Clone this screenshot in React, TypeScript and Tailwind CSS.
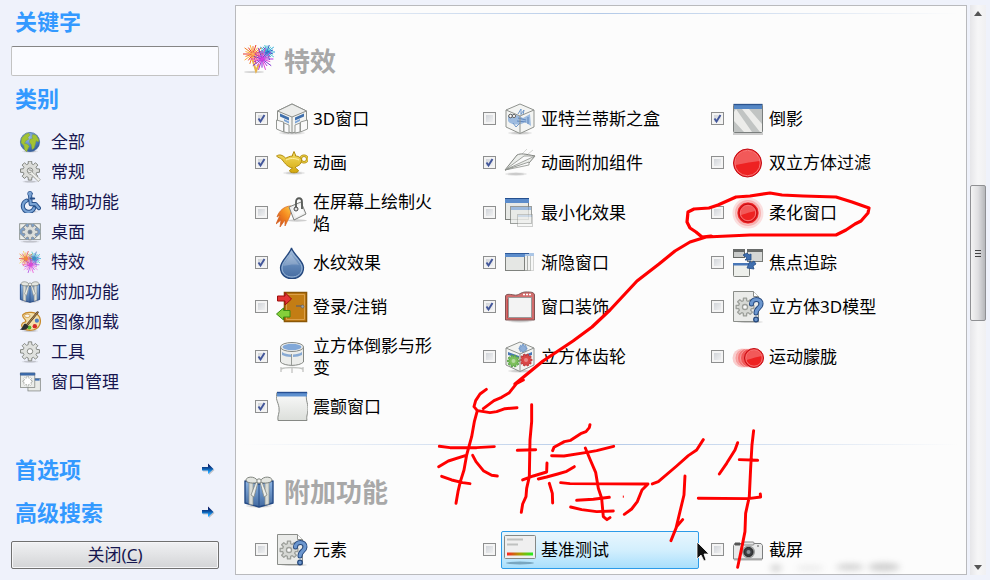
import type { ReactNode } from "react";
import clsx from "clsx";

interface IconProps {
  className?: string;
}

interface Plugin {
  label: string;
  icon: (props: IconProps) => ReactNode;
  enabled?: boolean;
  active?: boolean;
}

// outline of a cog wheel with straight teeth
function gearPath(cx: number, cy: number, r: number, teeth = 8) {
  const points: string[] = [];
  const step = (Math.PI * 2) / teeth;
  for (let i = 0; i < teeth; i++) {
    const a = i * step;
    [
      [-0.34, 0.72],
      [-0.22, 1],
      [0.22, 1],
      [0.34, 0.72],
    ].forEach(([offset, k]) => {
      const t = a + offset * step;
      points.push(`${(cx + Math.cos(t) * r * k).toFixed(2)} ${(cy + Math.sin(t) * r * k).toFixed(2)}`);
    });
  }
  return `M${points.join("L")}Z`;
}

function Gear({ cx, cy, r, fill = "#dcddda", stroke = "#7b7d79", teeth = 8 }: { cx: number; cy: number; r: number; fill?: string; stroke?: string; teeth?: number }) {
  return (
    <g stroke={stroke} strokeWidth="1.3" strokeLinejoin="round">
      <path d={gearPath(cx, cy, r, teeth)} fill={fill} />
      <circle cx={cx} cy={cy} r={r * 0.28} fill="#fafafa" />
    </g>
  );
}

function Burst({ cx, cy, r, colors }: { cx: number; cy: number; r: number; colors: string[] }) {
  return (
    <g strokeWidth="1" strokeLinecap="round">
      {Array.from({ length: 20 }, (_, i) => {
        const a = (i / 20) * Math.PI * 2;
        const k = i % 2 ? r * 0.75 : r;
        return <line key={i} x1={cx} y1={cy} x2={cx + Math.cos(a) * k} y2={cy + Math.sin(a) * k} stroke={colors[i % colors.length]} />;
      })}
    </g>
  );
}

function Icon({ className, children }: { className?: string; children: ReactNode }) {
  return (
    <svg viewBox="0 0 32 32" fill="none" aria-hidden="true" className={clsx("shrink-0", className ?? "size-8")}>
      {children}
    </svg>
  );
}

function Shadow({ cx = 16, cy = 30, rx = 12 }: { cx?: number; cy?: number; rx?: number }) {
  return (
    <g fill="#000">
      <ellipse cx={cx} cy={cy} rx={rx} ry="1.8" opacity=".08" />
      <ellipse cx={cx} cy={cy} rx={rx * 0.75} ry="1.2" opacity=".12" />
    </g>
  );
}

const GlobeIcon = ({ className }: IconProps) => (
  <Icon className={className}>
    <defs>
      <radialGradient id="globe" cx=".4" cy=".25" r=".85">
        <stop stopColor="#9fc0e6" />
        <stop offset=".6" stopColor="#4d7ebd" />
        <stop offset="1" stopColor="#274b87" />
      </radialGradient>
    </defs>
    <Shadow cy={29.6} />
    <circle cx="16" cy="16" r="14" fill="url(#globe)" stroke="#3f679f" />
    <path d="M4 10l5-5 5-2 2 3-3 3 1 3-4 2-2 4 4 1 3 3-2 4-2 4-3-3-1-6-4-4zM20 5l5 1 4 7-1 3-3-2-1 4-2 7-3 2-1-7-3-4 1-4 4-1-1-3z" fill="#a3c333" stroke="#7e9c2b" strokeWidth=".6" />
  </Icon>
);

const WrenchGearIcon = ({ className }: IconProps) => (
  <Icon className={className}>
    <Shadow cy={30} rx={11} />
    <Gear cx={16} cy={14} r={14} stroke="#777a75" />
    <path d="M14 13a5 5 0 016 4l11 10-3 3-10-10a5 5 0 01-5-4l4 1 1-3z" fill="#e9eae6" stroke="#8d8f89" />
    <path d="M20 18l10 10" stroke="#fff" />
  </Icon>
);

const WheelchairIcon = ({ className }: IconProps) => (
  <Icon className={className}>
    <Shadow cy={30} />
    <g strokeLinecap="round" strokeLinejoin="round">
      <g stroke="#27508a" strokeWidth="6">
        <path d="M16 5l1 14h7l5 6M11 14a8.500 8.500 0 1011 11" />
      </g>
      <circle cx="16" cy="4" r="3.5" fill="#7fa7d8" stroke="#27508a" />
      <path d="M16 5l1 14h7l5 6M11 14a8.500 8.500 0 1011 11" stroke="#79a3d4" strokeWidth="3.200" />
      <path d="M17 11h5" stroke="#27508a" strokeWidth="3" />
    </g>
  </Icon>
);

const DesktopIcon = ({ className }: IconProps) => (
  <Icon className={className}>
    <Shadow cy={30} rx={14} />
    <rect x="1" y="4" width="30" height="23" fill="#7d9fc9" stroke="#85908f" />
    <path d="M1 4h10l-10 9zM31 4H21l10 9zM1 27v-9l10 9zM31 27v-9l-10 9z" fill="#eef0ed" stroke="#8b8f8a" strokeLinejoin="round" />
    <path d={gearPath(16, 16, 11.5)} fill="#dcdedb" stroke="#7f858a" />
    <circle cx="16" cy="16" r="3" fill="#6d7f95" stroke="#788590" />
  </Icon>
);

const FireworksIcon = ({ className }: IconProps) => (
  <Icon className={className}>
    <ellipse cx="11" cy="27" rx="10" ry="1" fill="#000" opacity=".16" />
    <path d="M9 13l4 13 3-7" stroke="#e7b34c" strokeWidth="2" />
    <Burst cx={24} cy={7} r={8} colors={["#2aa9d8", "#2467c1", "#42c4cf"]} />
    <Burst cx={10} cy={9} r={10} colors={["#f47b20", "#e83b2b", "#fcb43c"]} />
    <Burst cx={19} cy={14} r={11} colors={["#b62fe0", "#e445d8", "#7d2ed4"]} />
    <circle cx="10" cy="9" r="1.8" fill="#ffb060" />
    <circle cx="19" cy="14" r="1.8" fill="#d93ce0" />
  </Icon>
);

const EffectsIcon = ({ className }: IconProps) => (
  <Icon className={className}>
    <g strokeWidth="1.4">
      <Burst cx={22} cy={11} r={10} colors={["#1ea4d3", "#245fbe", "#36c2b5"]} />
      <Burst cx={10} cy={11} r={11} colors={["#f58a20", "#e8392b", "#f7c63c"]} />
      <Burst cx={17} cy={20} r={12} colors={["#a82fe0", "#ee3fd0", "#f27ae0"]} />
    </g>
    <circle cx="10" cy="11" r="3" fill="#f08a3c" />
    <circle cx="22" cy="11" r="3" fill="#3d8fc4" />
    <circle cx="17" cy="20" r="3" fill="#d84bd8" />
  </Icon>
);

const GiftIcon = ({ className }: IconProps) => (
  <Icon className={className}>
    <defs>
      <linearGradient id="gift" x2="0" y2="1">
        <stop stopColor="#8fb6e4" />
        <stop offset="1" stopColor="#41699f" />
      </linearGradient>
    </defs>
    <Shadow cy={30} rx={13} />
    <path d="M2 5l14 3 14-3v22l-14 4-14-4z" fill="url(#gift)" stroke="#244a85" strokeWidth="1.4" strokeLinejoin="round" />
    <path d="M16 8v23" stroke="#244a85" />
    <path d="M6 6l4 1v22l-4-1zM26 6l-4 1v22l4-1z" fill="#d9dcd7" stroke="#8b8f8b" strokeWidth=".7" />
    <path d="M15 6l-4 15-3-2 5-13zM17 6l4 15 3-2-5-13z" fill="#eceeea" stroke="#868a84" strokeWidth=".8" />
    <path d="M15 5C11-1 3 1 3 4s8 4 12 2zM17 5c4-6 12-4 12-1s-8 4-12 2z" fill="#e4e6e1" stroke="#80857f" />
    <circle cx="16" cy="5" r="2.2" fill="#f4f4f1" stroke="#80857f" />
  </Icon>
);

const PaletteIcon = ({ className }: IconProps) => (
  <Icon className={className}>
    <Shadow cy={29} />
    <path d="M6 5c5-5 20-4 24 4 3 8 0 18-12 19-9 1-15-4-14-8 1-5 5-2 6-5 0-4-7-5-4-10z" fill="#f3dfaa" stroke="#c78a2c" strokeWidth="1.8" />
    <ellipse cx="12" cy="7" rx="4" ry="2.5" fill="#f7f5ef" stroke="#c78a2c" />
    <circle cx="26" cy="14" r="3" fill="#4b7ec4" />
    <circle cx="23" cy="22" r="3.2" fill="#d42a2a" />
    <circle cx="15" cy="24" r="3" fill="#58b52b" />
    <path d="M27 2L12 20" stroke="#5b4326" strokeWidth="3.4" strokeLinecap="round" />
    <path d="M27 2L12 20" stroke="#c59a61" strokeWidth="1.2" />
    <path d="M9 18l5 4c-2 6-8 6-13 5 5-2 4-7 8-9z" fill="#2b2f32" />
  </Icon>
);

const GearIcon = ({ className }: IconProps) => (
  <Icon className={className}>
    <Shadow cy={30} />
    <Gear cx={16} cy={15} r={14} fill="#e0e2df" stroke="#7c7f79" />
  </Icon>
);

const WindowsIcon = ({ className }: IconProps) => (
  <Icon className={className}>
    <rect x="13" y="11" width="18" height="18" fill="#e9ebe8" stroke="#777b77" />
    <path d="M14 11h16v3H14z" fill="#3d6eb2" />
    <rect x="2" y="3" width="21" height="21" fill="#eceeeb" stroke="#777b77" />
    <path d="M2 3h21v3H2z" fill="#3d6eb2" stroke="#315b96" />
    <path d={gearPath(12.5, 15, 7)} fill="#fff" stroke="#7a7d78" strokeDasharray="1.4 1" />
  </Icon>
);

const Cube3DIcon = ({ className }: IconProps) => (
  <Icon className={className}>
    <Shadow cy={30} rx={13} />
    <g stroke="#8b8e8a" strokeLinejoin="round">
      <path d="M16 1l14.500 7v18L16 30 1.500 26V8z" fill="#f3f4f2" />
      <path d="M16 1l14.500 7L16 14 1.500 8z" fill="#ecedeb" />
      <path d="M16 14v16" />
    </g>
    <path d="M4 10.500l9 4v3l-9-4zM28 10.500l-9 4v3l9-4z" fill="#3f6fac" />
    <path d="M8 16l5 2.500v2L8 18zM24 16l-5 2.500v2l5-2.500z" fill="#7aa3d6" />
    <path d="M.5 17l7 2v10l-7-3zM31.500 17l-7 2v10l7-3zM8 20l5 2v8l-5-1zM24 20l-5 2v8l5-1z" fill="#fafafa" stroke="#959894" />
  </Icon>
);

const LampIcon = ({ className }: IconProps) => (
  <Icon className={className}>
    <defs>
      <linearGradient id="lamp" x2="0" y2="1">
        <stop stopColor="#f6e068" />
        <stop offset="1" stopColor="#d3a70b" />
      </linearGradient>
    </defs>
    <Shadow cx={18} cy={26} rx={11} />
    <circle cx="28" cy="12" r="3.300" stroke="#b18b0c" strokeWidth="2.600" />
    <circle cx="28" cy="12" r="3.300" stroke="#ead04a" strokeWidth="1.100" />
    <path d="M.5 9c3-2 6-1 9 2 1 0 4-2 7-2v-1l1.500-3.500L19.500 8v1c4 0 6 3 6 4 0 5-4 6-6 7v1l3 2.500c0 3-9 3-9 0l3-2.500c-6-1-9-7-11-9-1-1-3-1-5-3z" fill="url(#lamp)" stroke="#b18b0c" strokeLinejoin="round" />
    <path d="M10 13c4-2 9-2 13 0" stroke="#fff3a8" />
  </Icon>
);

const FireIcon = ({ className }: IconProps) => (
  <Icon className={className}>
    <defs>
      <linearGradient id="fire" x1="1" x2="0" y2="1">
        <stop stopColor="#ffd44a" />
        <stop offset=".45" stopColor="#f58a1f" />
        <stop offset="1" stopColor="#c8421c" />
      </linearGradient>
    </defs>
    <ellipse cx="21" cy="23.500" rx="10" ry="1.200" fill="#000" opacity=".18" />
    <path d="M15 9C8 9 3 14 1 20l3-2-4 9 5-4-1 7 5-7v6l4-8c2-4 1-7 4-9z" fill="url(#fire)" stroke="#d2601e" strokeWidth=".7" />
    <path d="M13 10l12-5 5 12-12 6z" fill="#eceded" stroke="#7f817e" strokeLinejoin="round" />
    <path d="M16 11l8-4 4 9-8 4z" fill="#fff" opacity=".7" />
    <path d="M20 13V5c0-5 6-5 6 0v7" stroke="#575a57" strokeWidth="1.800" />
    <circle cx="20" cy="12" r="2" fill="#ddd" stroke="#444" />
  </Icon>
);

const DropIcon = ({ className }: IconProps) => (
  <Icon className={className}>
    <defs>
      <linearGradient id="drop" x2="0" y2="1">
        <stop stopColor="#a9c1dd" />
        <stop offset=".6" stopColor="#5d83b4" />
        <stop offset="1" stopColor="#456a9f" />
      </linearGradient>
    </defs>
    <path d="M15.500 1C14 7 4.500 14 4.500 20.500c0 15 23 15 23 0C27.500 14 17 7 15.500 1z" fill="url(#drop)" stroke="#24477d" strokeWidth="1.300" />
    <path d="M15.500 4C14 9 6 15 6 21c0 12 20 12 20 0 0-6-9-12-10.500-17z" stroke="#9cb8d8" />
    <path d="M7 19c2-5 6-8 8-12 2 4 6 7 8 11-5-1-10 0-16 1z" fill="#fff" opacity=".2" />
  </Icon>
);

const DoorIcon = ({ className }: IconProps) => (
  <Icon className={className}>
    <path d="M8.500 1.500h22v29h-22z" fill="#c37d14" stroke="#8b5707" strokeWidth="1.600" />
    <path d="M10.500 3.500h18v25h-18z" stroke="#dca04a" />
    <path d="M20 15h7" stroke="#70665a" strokeWidth="1.500" />
    <circle cx="26.500" cy="15.500" r="1.500" fill="#9ba3ac" stroke="#5b5b5b" strokeWidth=".6" />
    <path d="M1.500 5H9V1.500L15.500 8 9 14v-4H1.500z" fill="#e33434" stroke="#9e0d0d" strokeLinejoin="round" />
    <path d="M14 19.500H7.500V17L.5 23l7 6v-3H14z" fill="#84cf3a" stroke="#3b8b13" strokeLinejoin="round" />
  </Icon>
);

const CylinderIcon = ({ className }: IconProps) => (
  <Icon className={className}>
    <path d="M5 26v5M16 26v6M27 26v5" stroke="#b2b4b1" strokeWidth="1.500" opacity=".7" />
    <path d="M5 28c5-2 17-2 22 0" stroke="#c2c4c1" strokeWidth="1.500" />
    <path d="M4.500 6v15c4 4.500 19 4.500 23 0V6z" fill="#ecedeb" stroke="#858884" />
    <ellipse cx="16" cy="6" rx="11.500" ry="4.500" fill="#f2f3f1" stroke="#858884" />
    <ellipse cx="16" cy="6" rx="9.500" ry="3.200" fill="#82a8d8" />
    <path d="M6 11c3 2 5 2 9 2.500V16c-4 0-6-1-9-2zM26 11c-3 2-5 2-9 2.500V16c4 0 6-1 9-2z" fill="#87a9d3" />
    <path d="M15.500 13v12" stroke="#969995" />
  </Icon>
);

const WobblyIcon = ({ className }: IconProps) => (
  <Icon className={className}>
    <defs>
      <linearGradient id="wobbly" x2="0" y2="1">
        <stop stopColor="#fafafa" />
        <stop offset="1" stopColor="#dcdfdb" />
      </linearGradient>
    </defs>
    <path d="M1 1.500h30c-2 7 1 10 1 16s-2 7-1 12H2c-1-5 2-7 1-13S-1 8 1 1.500z" fill="url(#wobbly)" stroke="#868985" />
    <path d="M1 1h30v4.500H1z" fill="#5e90cf" />
    <path d="M1 1.500h30" stroke="#264f92" strokeWidth="1.400" />
  </Icon>
);

const AtlantisIcon = ({ className }: IconProps) => (
  <Icon className={className}>
    <Shadow />
    <path d="M16 1l14 6v17l-14 6.500L2 24V7z" fill="#f3f4f2" />
    <path d="M4 13c4-3 10-1 15 2l7-4 1 12-6-4c-5 4-15 3-17-1z" fill="#9dbbdf" />
    <path d="M14 11l3-5v6M17 11l3-4-1 5M9 20l3 4 4-4" stroke="#6f97c9" />
    <circle cx="6.500" cy="13" r="1.800" fill="#fff" stroke="#555" />
    <circle cx="10" cy="13" r="1.600" fill="#fff" stroke="#666" />
    <path d="M14 15l8 2M13 18l9 1M24 14v7" stroke="#5d86bd" />
    <path d="M16 1l14 6v17l-14 6.500L2 24V7zM2 7l14 6 14-6M16 13v17" stroke="#8f928e" strokeLinejoin="round" />
  </Icon>
);

const PaperPlaneIcon = ({ className }: IconProps) => (
  <Icon className={className}>
    <Shadow cx={12} cy={27} rx={11} />
    <path d="M18 7l5-5M24 7l5-4" stroke="#d3d5d2" />
    <path d="M1 23L13 8c4-2 8-1 18 1L25 16 1 23z" fill="#eceeeb" stroke="#80837f" strokeLinejoin="round" />
    <path d="M1 23L20 9l11 0zM1 23l24-8v3z" fill="#fafafa" stroke="#8d908c" strokeWidth=".8" strokeLinejoin="round" />
  </Icon>
);

const MinimizeIcon = ({ className }: IconProps) => (
  <Icon className={className}>
    <rect x="1.500" y="1.500" width="23" height="21" fill="#e7e9e6" stroke="#7d807c" />
    <path d="M1 1h24v5H1z" fill="#5b8ccb" />
    <path d="M1 1.500h24" stroke="#25508f" />
    <g opacity=".75">
      <rect x="6.500" y="9.500" width="21" height="17" fill="#e9ebe8" stroke="#7d807c" />
      <path d="M7 10h20v3H7z" fill="#85abda" />
    </g>
    <g opacity=".4">
      <rect x="13.500" y="17.500" width="15" height="12" fill="#f2f3f1" stroke="#8b8e8a" />
      <path d="M14 18h14v2H14z" fill="#a9c4e6" />
    </g>
  </Icon>
);

const FadingIcon = ({ className }: IconProps) => (
  <Icon className={className}>
    <g stroke="#9da09c">
      <rect x="10.500" y="6.500" width="19" height="17" fill="#f2f3f1" opacity=".4" />
      <rect x="8.500" y="6.500" width="18" height="17" fill="#eff0ee" opacity=".6" />
      <rect x="5.500" y="6.500" width="18" height="17" fill="#eff0ee" opacity=".8" />
      <rect x="1.500" y="6.500" width="19" height="17" fill="#e5e7e4" stroke="#7f827e" />
    </g>
    <path d="M1 6h20v4H1z" fill="#5b8ccb" />
    <path d="M21 6h9v3h-9z" fill="#abc6e6" />
    <path d="M1 6.500h24" stroke="#2f5b9b" />
  </Icon>
);

const DecorationIcon = ({ className }: IconProps) => (
  <Icon className={className}>
    <Shadow />
    <path d="M1.500 5C2 3 5 3 10 4s6-3 12-3c5 0 8 0 8.500 3v25h-29z" fill="#d26c6c" stroke="#7e5454" />
    <path d="M3.500 8v19h25" stroke="#c24a4a" />
    <rect x="4.500" y="6.500" width="23" height="20" fill="#f3f3f3" stroke="#999" />
    <path d="M19 3.500h2M22 3.500h2M25 3.500h2" stroke="#fff" strokeWidth="1.500" />
  </Icon>
);

const CubeGearsIcon = ({ className }: IconProps) => (
  <Icon className={className}>
    <Shadow />
    <path d="M16 1l14 6v17l-14 6.500L2 24V7z" fill="#f3f4f2" />
    <path d={gearPath(19, 7.5, 4)} fill="#8fafd8" stroke="#6f95c6" />
    <path d="M4 11l11 4v2L4 14zM28 11l-10 4v2l10-3z" fill="#4776b4" />
    <path d={gearPath(9.5, 20, 6, 10)} fill="#7fc05b" stroke="#5aa348" />
    <circle cx="9.500" cy="20" r="2" fill="#b5dba0" />
    <path d={gearPath(22, 19, 6, 10)} fill="#dc4747" stroke="#c03636" />
    <circle cx="22" cy="19" r="2" fill="#e88888" />
    <path d="M16 1l14 6v17l-14 6.500L2 24V7zM2 7l14 6 14-6M16 13v17" stroke="#8f928e" strokeLinejoin="round" />
  </Icon>
);

const ReflectionIcon = ({ className }: IconProps) => (
  <Icon className={className}>
    <path d="M1 31h30" stroke="#000" opacity=".25" strokeWidth="1.500" />
    <rect x="1.500" y="1.500" width="29" height="28" rx="1" fill="#c1c4c3" stroke="#7a7e7d" />
    <path d="M2 9v9l10 11h8L4 6zM10 6l18 23h2v-8L17 6z" fill="#ececea" />
    <path d="M2 2h28v4H2z" fill="#5587c5" />
    <path d="M1.500 1.500h29" stroke="#2c548e" strokeWidth="1.300" />
  </Icon>
);

function RedBall({ cx, cy, r }: { cx: number; cy: number; r: number }) {
  return (
    <g>
      <circle cx={cx} cy={cy} r={r} fill="#ee2222" stroke="#c20d16" />
      <circle cx={cx} cy={cy} r={r - 1.3} stroke="#f77676" />
      <path d={`M${cx - r + 2} ${cy + 2}A${r - 2} ${r - 2} 0 01${cx + r - 2} ${cy - 2}Q${cx + 2} ${cy - 1} ${cx - r + 2} ${cy + 2}Z`} fill="#fff" opacity=".25" />
    </g>
  );
}

const RedBallIcon = ({ className }: IconProps) => (
  <Icon className={className}>
    <RedBall cx={15.5} cy={16} r={14} />
  </Icon>
);

const BlurBallIcon = ({ className }: IconProps) => (
  <Icon className={className}>
    <circle cx="16" cy="16" r="15.500" fill="#f36b6b" opacity=".2" />
    <circle cx="16" cy="16" r="13" fill="#f04b4b" opacity=".3" />
    <circle cx="16" cy="16" r="11" fill="#ee2222" stroke="#fff" strokeOpacity=".5" />
    <RedBall cx={16} cy={16} r={9} />
  </Icon>
);

const MotionBallIcon = ({ className }: IconProps) => (
  <Icon className={className}>
    <circle cx="10" cy="17" r="9.500" fill="#f03a3a" opacity=".25" />
    <circle cx="12.500" cy="17" r="9.500" fill="#f03a3a" stroke="#fff" strokeWidth=".6" opacity=".3" />
    <circle cx="15" cy="17" r="9.500" fill="#f03a3a" stroke="#fff" strokeWidth=".6" opacity=".4" />
    <circle cx="18" cy="17" r="9.500" fill="#f03a3a" stroke="#fff" strokeWidth=".6" opacity=".5" />
    <RedBall cx={22} cy={17} r={9.5} />
  </Icon>
);

const FocusIcon = ({ className }: IconProps) => (
  <Icon className={className}>
    <rect x="1.500" y="2.500" width="11" height="8" fill="#c9cbca" stroke="#666966" />
    <rect x="15.500" y="2.500" width="15" height="12" fill="#d5d7d6" stroke="#777a77" />
    <rect x="1.500" y="16.500" width="16" height="13" rx="1" fill="#edefeb" stroke="#7b7e7a" />
    <path d="M1 2h12v3H1zM15 2h16v3H15z" fill="#686b6a" />
    <path d="M1 16h17v2.500H1z" fill="#4877b8" />
    <path d="M11 8l4-2 2 2 2-1v6h-6l2-2zM22 14l-3 2-1-2-3 7 7 1-1-3 3-2z" fill="#406faf" stroke="#254c86" strokeLinejoin="round" strokeWidth=".8" />
  </Icon>
);

const UnknownPluginIcon = ({ className }: IconProps) => (
  <Icon className={className}>
    <Shadow cx={18} cy={31} rx={13} />
    <path d="M1.500.500h20l5 5v25h-25z" fill="#eaebe9" stroke="#8a8d89" />
    <path d="M21.500.500v5h5" fill="#fff" stroke="#8a8d89" />
    <Gear cx={13} cy={16} r={9} fill="#d6d8d4" stroke="#9c9f9a" />
    <g strokeLinecap="round">
      <path d="M19.500 13c0-6 10-6 9.500 0 0 4-5 4-5 9" stroke="#24477c" strokeWidth="5" />
      <path d="M19.500 13c0-6 10-6 9.500 0 0 4-5 4-5 9" stroke="#6c97cf" strokeWidth="3.200" />
    </g>
    <circle cx="24" cy="28.500" r="2.300" fill="#6c97cf" stroke="#24477c" strokeWidth="1.200" />
  </Icon>
);

const BenchmarkIcon = ({ className }: IconProps) => (
  <Icon className={className}>
    <defs>
      <linearGradient id="bench">
        <stop stopColor="#f22" />
        <stop offset=".5" stopColor="#a8a000" />
        <stop offset="1" stopColor="#2e2" />
      </linearGradient>
    </defs>
    <ellipse cx="16" cy="29" rx="14" ry="1.500" fill="#1d4a66" opacity=".4" />
    <rect x=".5" y="1.500" width="31" height="23" rx="1" fill="#efefef" stroke="#858885" />
    <path d="M3 5.500h16M3 10.500h11" stroke="#bfc1c0" strokeWidth="1.800" />
    <path d="M3 18.500h26v3H3z" fill="url(#bench)" />
  </Icon>
);

const CameraIcon = ({ className }: IconProps) => (
  <Icon className={className}>
    <path d="M3 9.500h26l1.500 2v13.500H1.500V11.500z" fill="#e9eaea" stroke="#7c7e7e" strokeLinejoin="round" />
    <path d="M3 9h5v2H3zM25 12h2" fill="#555" stroke="#555" />
    <rect x="11" y="8" width="11" height="3" rx="1" fill="#e3e4e4" stroke="#888" />
    <circle cx="16.500" cy="18" r="6.500" fill="#9b9d9d" />
    <circle cx="16.500" cy="18" r="4.500" fill="#3b3e41" stroke="#222" />
    <circle cx="16.500" cy="18" r="2" fill="#8c9299" />
    <path d="M2 26h28" stroke="#666" opacity=".5" />
  </Icon>
);

const ArrowIcon = () => (
  <svg viewBox="0 0 14 14" className="size-[14px] shrink-0" aria-hidden="true">
    <defs>
      <linearGradient id="arrow" x2="0" y2="1">
        <stop stopColor="#06064f" />
        <stop offset=".45" stopColor="#0d4f9c" />
        <stop offset=".8" stopColor="#18a0ff" />
      </linearGradient>
    </defs>
    <path d="M2 6.500h6V3l5.500 5L8 13V9.500H2z" fill="#000" opacity=".2" />
    <path d="M1 5h6V1.500L12.500 7 7 12V8.500H1z" fill="url(#arrow)" />
  </svg>
);

const categories = [
  { label: "全部", icon: GlobeIcon },
  { label: "常规", icon: WrenchGearIcon },
  { label: "辅助功能", icon: WheelchairIcon },
  { label: "桌面", icon: DesktopIcon },
  { label: "特效", icon: EffectsIcon },
  { label: "附加功能", icon: GiftIcon },
  { label: "图像加载", icon: PaletteIcon },
  { label: "工具", icon: GearIcon },
  { label: "窗口管理", icon: WindowsIcon },
];

const effects: Plugin[] = [
  { label: "3D窗口", icon: Cube3DIcon, enabled: true },
  { label: "亚特兰蒂斯之盒", icon: AtlantisIcon },
  { label: "倒影", icon: ReflectionIcon, enabled: true },
  { label: "动画", icon: LampIcon, enabled: true },
  { label: "动画附加组件", icon: PaperPlaneIcon, enabled: true },
  { label: "双立方体过滤", icon: RedBallIcon },
  { label: "在屏幕上绘制火焰", icon: FireIcon },
  { label: "最小化效果", icon: MinimizeIcon },
  { label: "柔化窗口", icon: BlurBallIcon },
  { label: "水纹效果", icon: DropIcon, enabled: true },
  { label: "渐隐窗口", icon: FadingIcon, enabled: true },
  { label: "焦点追踪", icon: FocusIcon },
  { label: "登录/注销", icon: DoorIcon },
  { label: "窗口装饰", icon: DecorationIcon, enabled: true },
  { label: "立方体3D模型", icon: UnknownPluginIcon },
  { label: "立方体倒影与形变", icon: CylinderIcon, enabled: true },
  { label: "立方体齿轮", icon: CubeGearsIcon },
  { label: "运动朦胧", icon: MotionBallIcon },
  { label: "震颤窗口", icon: WobblyIcon, enabled: true },
];

const extras: Plugin[] = [
  { label: "元素", icon: UnknownPluginIcon },
  { label: "基准测试", icon: BenchmarkIcon, active: true },
  { label: "截屏", icon: CameraIcon },
];

function PluginCell({ label, icon: PluginIcon, enabled, active }: Plugin) {
  return (
    <div className="flex items-center gap-[5px] py-[3px] pr-3">
      <span className="mb-0.5 grid size-[13px] shrink-0">
        <input
          type="checkbox"
          aria-label={label}
          defaultChecked={enabled}
          className="peer col-start-1 row-start-1 size-[13px] appearance-none border border-[#8e8f8f] bg-linear-to-br from-[#c9cdd3] to-[#f8f8f8] shadow-[inset_0_0_0_2px_#f4f4f4]"
        />
        <svg viewBox="0 0 13 13" className="pointer-events-none col-start-1 row-start-1 hidden size-[13px] peer-checked:block" aria-hidden="true">
          <path d="M3.500 6.500L5.500 9.500L9.500 3" fill="none" stroke="#42569a" strokeWidth="1.900" />
        </svg>
      </span>
      <button
        type="button"
        className={clsx(
          "flex min-w-0 flex-1 items-center gap-[5px] rounded-[2px] border p-[2px] text-left",
          active ? "border-[#2c9be8] bg-linear-to-b from-[#e8f6fd] via-[#d3effd] to-[#a9dffc]" : "border-transparent",
        )}
      >
        <PluginIcon />
        <span className="max-w-[130px] text-[17px] leading-[22px] text-black">{label}</span>
      </button>
    </div>
  );
}

function Section({ title, icon: SectionIcon, plugins }: { title: string; icon: (props: IconProps) => ReactNode; plugins: Plugin[] }) {
  return (
    <section className="pb-[15px]">
      <div className="mx-[7px] h-px bg-linear-to-r from-transparent via-[#b4cae8] to-transparent" />
      <h2 className="flex items-center gap-[9px] pt-[31px] pb-5 pl-[7px] text-[26px] leading-8 font-bold text-[#a8a8a8]">
        <SectionIcon />
        {title}
      </h2>
      <div className="grid grid-cols-3 pr-[27px] pl-[19px]">
        {plugins.map((plugin) => (
          <PluginCell key={plugin.label} {...plugin} />
        ))}
      </div>
    </section>
  );
}

function Sidebar() {
  return (
    <aside className="flex w-[235px] shrink-0 flex-col pt-[6px] pr-4 pb-[11px] pl-[11px]">
      <label htmlFor="keyword" className="pl-1 text-[22px] leading-[30px] font-bold text-[#3399ff]">
        关键字
      </label>
      <input
        id="keyword"
        type="text"
        className="mt-[10px] h-[30px] w-full rounded-[2px] border border-[#c3c3c3] border-t-[#858585] bg-[#fafbff] px-2 text-[17px]"
      />
      <h2 className="mt-[7px] pl-1 text-[22px] leading-[30px] font-bold text-[#3399ff]">类别</h2>
      <ul className="mt-[14px] pl-2">
        {categories.map(({ label, icon: CategoryIcon }) => (
          <li key={label}>
            <button type="button" className="flex h-[30px] items-center gap-[10px] text-[17px] leading-[22px] text-[#16164f]">
              <CategoryIcon className="size-[22px]" />
              {label}
            </button>
          </li>
        ))}
      </ul>
      <div className="mt-auto flex flex-col gap-[13px]">
        {["首选项", "高级搜索"].map((label) => (
          <button key={label} type="button" className="flex items-center justify-between pr-1 pl-1 text-[22px] leading-[30px] font-bold text-[#3399ff]">
            {label}
            <ArrowIcon />
          </button>
        ))}
        <button
          type="button"
          className="mt-px h-7 rounded-[2px] border border-[#707070] bg-linear-to-b from-[#f0f1f3] via-[#e2e3e5] to-[#d3d4d6] text-[17px] leading-[22px] text-[#16164f] shadow-[inset_0_0_0_1px_#f6f6f8]"
        >
          关闭(<span className="underline">C</span>)
        </button>
      </div>
    </aside>
  );
}

// share of the track above the thumb and taken by it
const scroll = { offset: 30.5, size: 25.3 };

function Scrollbar() {
  return (
    <div className="ml-[3px] flex w-4 shrink-0 flex-col bg-linear-to-r from-[#e6e6e9] via-[#f6f6f7] to-[#f0f0f2]">
      <button type="button" aria-label="向上" className="flex h-4 items-center justify-center">
        <svg viewBox="0 0 8 5" className="h-[5px] w-2">
          <path d="M0 5l4-5 4 5z" fill="#555" />
        </svg>
      </button>
      <div className="min-h-0 flex-1">
        <div style={{ height: `${scroll.offset}%` }} />
        <div
          style={{ height: `${scroll.size}%` }}
          className="flex flex-col items-center justify-center gap-[2px] rounded-[2px] border border-[#8f9093] bg-linear-to-r from-[#f4f4f4] via-[#dfdfe1] to-[#b6b7ba]"
        >
          <span className="h-px w-1.5 bg-[#444]" />
          <span className="h-px w-1.5 bg-[#444]" />
          <span className="h-px w-1.5 bg-[#444]" />
        </div>
      </div>
      <button type="button" aria-label="向下" className="flex h-4 items-center justify-center">
        <svg viewBox="0 0 8 5" className="h-[5px] w-2">
          <path d="M0 0l4 5 4-5z" fill="#555" />
        </svg>
      </button>
    </div>
  );
}

// freehand strokes and the mouse pointer drawn over the window
function Annotations() {
  return (
    <svg width="990" height="580" viewBox="0 0 990 580" fill="none" className="pointer-events-none absolute top-0 left-0" aria-hidden="true">
      <g fill="#777" opacity=".35" style={{ filter: "blur(3px)" }}>
        <ellipse cx="776" cy="568" rx="6" ry="3" />
        <ellipse cx="810" cy="568" rx="14" ry="2" opacity=".5" />
        <ellipse cx="850" cy="567" rx="14" ry="3" />
        <ellipse cx="884" cy="567" rx="16" ry="4" />
      </g>
      <g stroke="#f00" strokeLinecap="round" strokeLinejoin="round">
        <path
          strokeWidth="3.200"
          d="M711 236L702 237L696 232L690 228L687 222L688 212L694 209L709 208L718 205L736 197L750 196L770 193L782 195L803 196L836 197L852 202L869 208L868 213L861 221L855 224L846 230L836 235L750 235L706 237L690 242L675 251L659 264L637 281L610 310L592 327L573 341L543 361L515 384"
        />
        <g transform="translate(420 380) scale(.3333)" strokeWidth="8.800">
          <path d="M310 0L290 10L268 38L245 52L222 62L190 86M199 28L180 42L167 62L162 80L172 92L210 98L230 95L255 86L291 83" />
          <path d="M172 92L163 125L155 170L140 225L132 270L121 305L114 335L108 370M58 199L90 203L170 203L223 200M56 260L85 243L138 226M158 226L168 245L190 272L215 286L232 288M65 289L95 300L128 308L150 311" />
          <path d="M335 74L335 125L330 180L328 290L320 325L318 350L308 372L304 397M292 211L347 209M308 300L340 288L380 276L381 249M388 310L397 340L398 369" />
          <path d="M398 212L402 202L433 185L452 181L482 161L498 155L508 143L510 134M395 227L432 228L496 218L530 212L581 199M355 297L380 291L413 282L440 274L463 260M496 204L511 240L527 277L535 325L545 355L550 410L561 419L570 413" />
          <path d="M422 308L450 311L684 312L666 330L652 365L635 387L613 403M470 361L520 358L568 352M452 381L485 389L530 395L580 393" />
          <path d="M610 348v4" strokeWidth="3" />
          <path d="M850 179L830 210L805 227L770 258L715 305L697 312M795 288L792 345L780 395L768 445L753 482L770 440L788 419" />
          <path d="M953 188L945 210L920 250L898 282M1001 152L996 195L992 265L988 350L977 400L975 455L963 515L953 562M958 239L1013 241M835 355L985 356L1022 351L1021 342" />
        </g>
      </g>
      <path d="M697 542v17l4-4 3 6 2-1-2-6h5z" fill="#111" stroke="#fff" strokeWidth=".8" />
    </svg>
  );
}

export default function App() {
  return (
    <div className="relative flex h-screen overflow-hidden bg-[#eff2fb] font-['Noto_Sans','Noto_Sans_CJK_SC',sans-serif]">
      <Sidebar />
      <div className="flex min-w-0 flex-1 py-[5px] pr-1">
        <main className="min-w-0 flex-1 overflow-hidden border border-[#b9babd] bg-[#fcfcfc] pt-[7px]">
          <Section title="特效" icon={FireworksIcon} plugins={effects} />
          <Section title="附加功能" icon={GiftIcon} plugins={extras} />
        </main>
        <Scrollbar />
      </div>
      <Annotations />
    </div>
  );
}
